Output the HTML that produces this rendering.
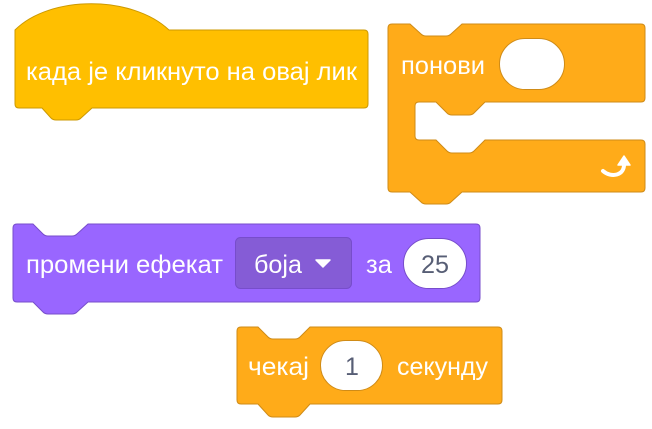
<!DOCTYPE html>
<html><head><meta charset="utf-8"><style>
html,body{margin:0;padding:0;background:#fff;width:652px;height:429px;overflow:hidden}
svg{display:block}
text{font-family:"Liberation Sans",sans-serif;font-size:25px;fill:#fff}
</style></head><body>
<svg width="652" height="429" viewBox="0 0 652 429" xmlns="http://www.w3.org/2000/svg">
<path d="M15,30 C50,-5 132,-5 169,30 L364,30 Q368,30 368,34 L368,104 Q368,108 364,108 L92,108 L81,118 Q79,120 76,120 L56,120 Q53,120 51,118 L42,108 L19,108 Q15,108 15,104 Z" fill="#FFBF00" stroke="#CC9900" stroke-width="1"/>
<text x="26" y="80" textLength="331" lengthAdjust="spacingAndGlyphs">када је кликнуто на овај лик</text>

<path d="M392,24 L410,24 L421,34 Q423,36 426,36 L446,36 Q449,36 451,34 L462,24 L641,24 Q645,24 645,28 L645,98 Q645,102 641,102 L485,102 L474,113 Q472,115 469,115 L452,115 Q449,115 447,113 L436,102 L419,102 Q415,102 415,106 L415,136 Q415,140 419,140 L436,140 L447,151 Q449,153 452,153 L469,153 Q472,153 474,151 L485,140 L641,140 Q645,140 645,144 L645,188 Q645,192 641,192 L462,192 L451,202 Q449,204 446,204 L426,204 Q423,204 421,202 L410,192 L392,192 Q388,192 388,188 L388,28 Q388,24 392,24 Z" fill="#FFAB19" stroke="#CF8B17" stroke-width="1"/>
<text x="401" y="74" textLength="84" lengthAdjust="spacingAndGlyphs">понови</text>
<rect x="499.5" y="38.5" width="65" height="51" rx="25.5" fill="#fff" stroke="#CF8B17" stroke-width="1"/>
<path d="M603,171 C611,178 625,176 624,163" fill="none" stroke="#fff" stroke-width="4" stroke-linecap="round"/>
<path d="M618,165 L624,156 L630,165 Z" fill="#fff" stroke="#fff" stroke-width="1.5" stroke-linejoin="round"/>

<path d="M17,224 L33,224 L43,234 Q45,236 48,236 L72,236 Q75,236 77,234 L88,224 L476,224 Q480,224 480,228 L480,298 Q480,302 476,302 L88,302 L77,312 Q75,314 72,314 L48,314 Q45,314 43,312 L33,302 L17,302 Q13,302 13,298 L13,228 Q13,224 17,224Z" fill="#9966FF" stroke="#774DCB" stroke-width="1"/>
<text x="26" y="273" textLength="197" lengthAdjust="spacingAndGlyphs">промени ефекат</text>
<rect x="235.5" y="237.5" width="116" height="51" rx="5" fill="#855CD6" stroke="#774DCB" stroke-width="1"/>
<text x="254" y="273" textLength="48" lengthAdjust="spacingAndGlyphs">боја</text>
<path d="M316,260 L330,260 L323,267 Z" fill="#fff" stroke="#fff" stroke-width="1.5" stroke-linejoin="round"/>
<text x="366" y="273" textLength="26" lengthAdjust="spacingAndGlyphs">за</text>
<rect x="403.5" y="238.5" width="63" height="50" rx="25" fill="#fff" stroke="#774DCB" stroke-width="1"/>
<text x="421" y="273" textLength="28" lengthAdjust="spacingAndGlyphs" style="fill:#575E75">25</text>

<path d="M241,327 L258,327 L268,337 Q270,339 273,339 L295,339 Q298,339 300,337 L310,327 L498,327 Q502,327 502,331 L502,400 Q502,404 498,404 L310,404 L300,415 Q298,417 295,417 L273,417 Q270,417 268,415 L258,404 L241,404 Q237,404 237,400 L237,331 Q237,327 241,327Z" fill="#FFAB19" stroke="#CF8B17" stroke-width="1"/>
<text x="248" y="375" textLength="61" lengthAdjust="spacingAndGlyphs">чекај</text>
<rect x="320.5" y="340.5" width="62" height="50" rx="25" fill="#fff" stroke="#CF8B17" stroke-width="1"/>
<text x="345" y="375" style="fill:#575E75">1</text>
<text x="397" y="375" textLength="91" lengthAdjust="spacingAndGlyphs">секунду</text>
</svg>
</body></html>
